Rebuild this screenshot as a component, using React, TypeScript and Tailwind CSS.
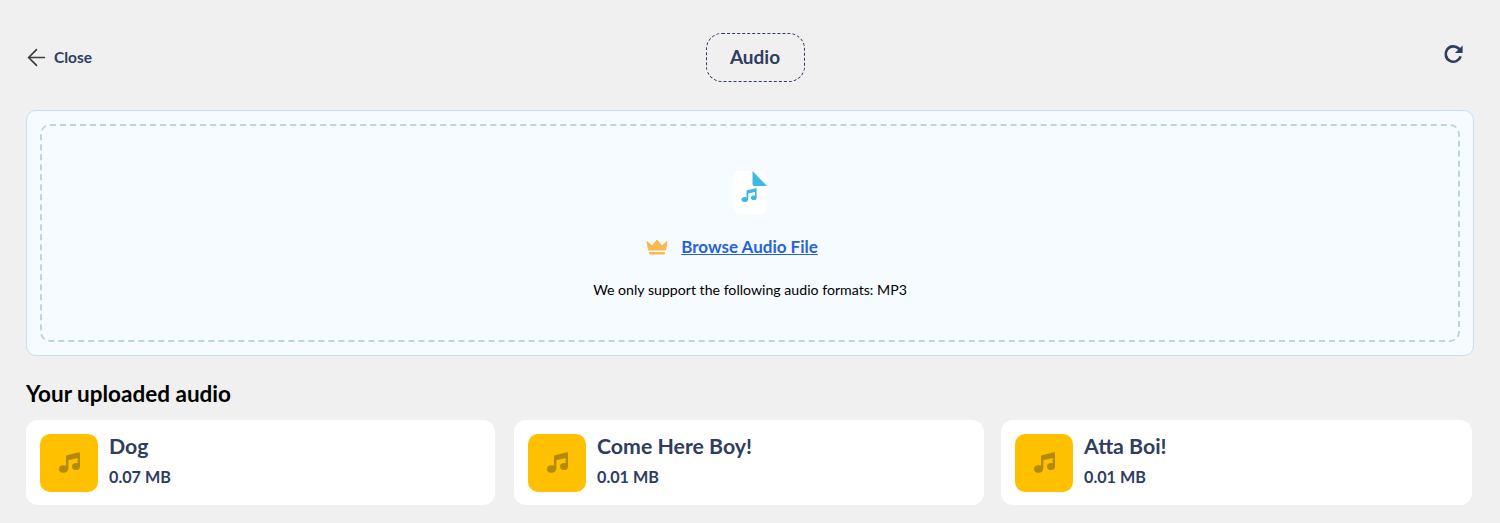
import { ArrowLeft } from "lucide-react"

const font = { fontFamily: '"Lato", "Noto Sans", sans-serif' }

function NoteShape() {
  return (
    <>
      <path d="M7 4.7Q7 3.6 8 3.3L19.8.3Q21 0 21 1.2V14.5H18.6V6L9.4 8.2V17H7z" />
      <ellipse cx="4.5" cy="17" rx="4.5" ry="3.7" />
      <ellipse cx="17" cy="14.5" rx="4" ry="3.6" />
    </>
  )
}

function AudioCard({ name, size, className }: { name: string; size: string; className: string }) {
  return (
    <div className={`flex h-[85px] items-center gap-[11px] rounded-xl bg-white pl-[14px] ${className}`}>
      <div className="flex h-[58px] w-[58px] shrink-0 items-center justify-center rounded-[10px] bg-[#ffc000]">
        <svg viewBox="0 0 21 21" className="h-[21px] w-[21px]" fill="#b38a0e">
          <NoteShape />
        </svg>
      </div>
      <div className="-mt-[3px] flex flex-col gap-[8px]">
        <div className="-mt-[2px] text-[21.3px] leading-[26px] font-bold text-[#2f3d5f]">{name}</div>
        <div className="text-[16.2px] leading-[20px] font-bold text-[#2f3d5f]">{size}</div>
      </div>
    </div>
  )
}

export default function App() {
  return (
    <div style={font} className="h-[523px] overflow-hidden bg-[#f0f0f0] px-[26px] pt-[33px]">
      <header className="flex h-[49px] items-center justify-between">
        <div className="flex w-[130px] items-center gap-[4px] text-[#2f3d5f]">
          <ArrowLeft className="-ml-[3px] h-[27px] w-[27px] text-[#3c3c3c]" strokeWidth={1.5} />
          <span className="text-[15.5px] font-bold">Close</span>
        </div>
        <div className="flex h-[49px] w-[99px] items-center justify-center rounded-2xl border border-dashed border-[#2f3d5f] text-[19px] font-bold text-[#2f3d5f]">
          Audio
        </div>
        <div className="-mt-[6px] flex w-[120px] justify-end pr-[9px]">
          <svg viewBox="0 0 24 24" className="h-[23px] w-[23px]" fill="none" stroke="#2f3d5f" strokeWidth={2.8}>
            <path d="M19.5 14a8 8 0 1 1-2-8.2L20 8.5" />
            <path d="M21.5 2.5v8h-8z" fill="#2f3d5f" stroke="none" />
          </svg>
        </div>
      </header>

      <section className="mt-[28px] h-[246px] rounded-[10px] border border-[#c9dff0] bg-[#f5fbff] p-[13px]">
        <div className="flex h-full flex-col items-center rounded-[10px] border-2 border-dashed border-[#bcd5e6] pt-[45px]">
          <div className="h-[43px] w-[34px] rounded-md bg-white">
            <svg viewBox="0 0 34 43" className="h-[43px] w-[34px]">
              <path d="M19.500 0L34 15H21.500a2 2 0 0 1-2-2z" fill="#3db8e0" />
              <g transform="translate(8.500 17) scale(0.72 0.68)" fill="#3db8e0">
                <NoteShape />
              </g>
            </svg>
          </div>
          <div className="mt-[20px] mr-[36px] flex items-center gap-[13px]">
            <svg viewBox="0 0 22 16" className="h-[16px] w-[22px]" fill="#fbb84c" stroke="#fbb84c" strokeLinejoin="round">
              <path d="M1 2.500l5 4.500 5-6 5 6 5-4.500-1.500 8.500h-17z" />
              <rect x="3" y="13" width="16" height="2.500" rx="1" stroke="none" />
            </svg>
            <a className="text-[17px] font-bold text-[#2563d9] underline">Browse Audio File</a>
          </div>
          <p className="mt-[19px] text-[14.15px] text-black">We only support the following audio formats: MP3</p>
        </div>
      </section>

      <h2 className="mt-[24px] text-[22.5px] leading-[28px] font-bold text-black">Your uploaded audio</h2>

      <div className="mt-[12px] flex">
        <AudioCard name="Dog" size="0.07 MB" className="w-[469px]" />
        <AudioCard name="Come Here Boy!" size="0.01 MB" className="ml-[19px] w-[470px]" />
        <AudioCard name="Atta Boi!" size="0.01 MB" className="ml-[17px] w-[471px]" />
      </div>
    </div>
  )
}
